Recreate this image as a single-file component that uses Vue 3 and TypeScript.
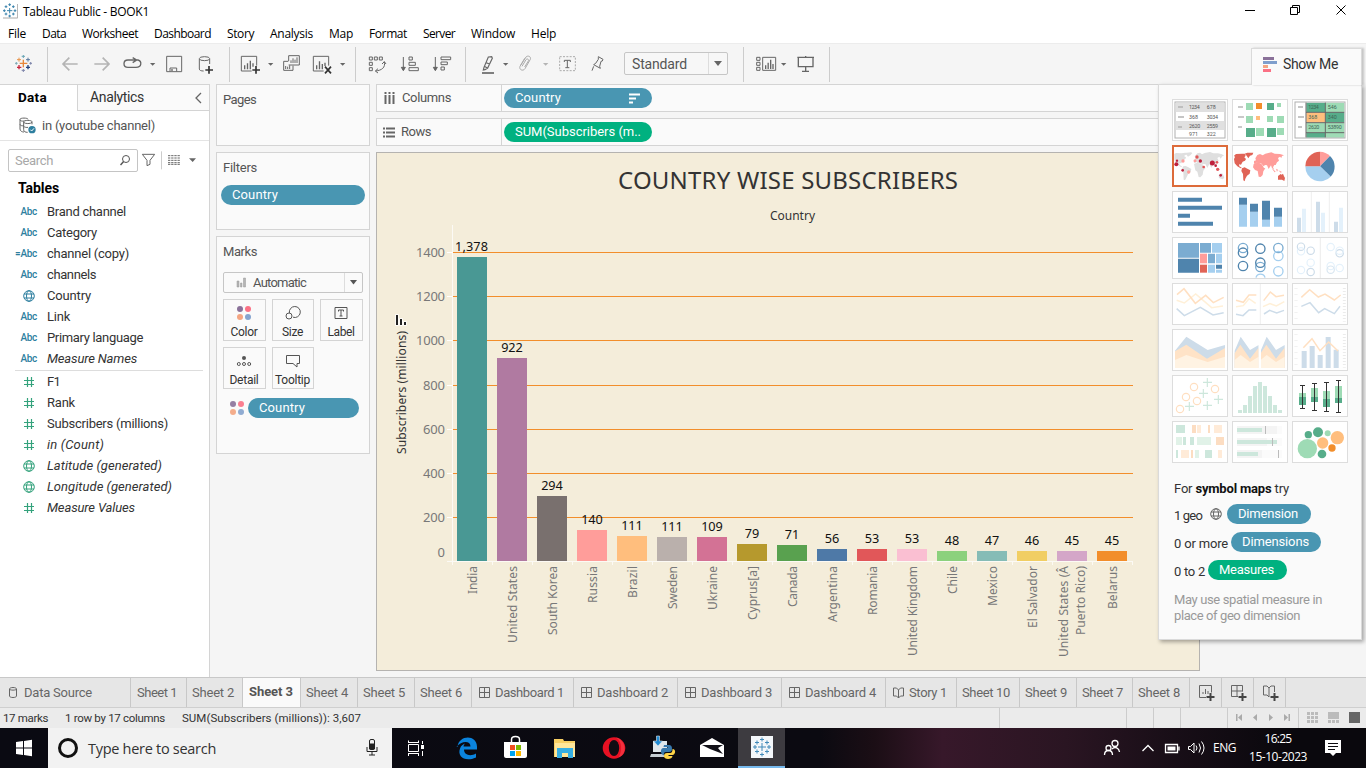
<script setup lang="ts">
interface Bar { name: string; value: string; top: number; color: string; len: number; second?: string }
interface Field { kind: 'abc' | 'calc' | 'geo' | 'num'; name: string; w: number; italic?: boolean }

// Adjusts tracking so that a label takes exactly the given width.
const vFit = {
  mounted(el: HTMLElement, binding: { value: number }) {
    const text = el.textContent ?? ''
    const width = el.getBoundingClientRect().width
    if (text.length) el.style.letterSpacing = `${(binding.value - width) / text.length}px`
  },
}

const menu: [string, number][] = [
  ['File', 18], ['Data', 24], ['Worksheet', 56], ['Dashboard', 57], ['Story', 27], ['Analysis', 43],
  ['Map', 24], ['Format', 38], ['Server', 32], ['Window', 44], ['Help', 25],
]

const dims: Field[] = [
  { kind: 'abc', name: 'Brand channel', w: 79 },
  { kind: 'abc', name: 'Category', w: 50 },
  { kind: 'calc', name: 'channel (copy)', w: 82 },
  { kind: 'abc', name: 'channels', w: 49 },
  { kind: 'geo', name: 'Country', w: 44 },
  { kind: 'abc', name: 'Link', w: 23 },
  { kind: 'abc', name: 'Primary language', w: 96 },
  { kind: 'abc', name: 'Measure Names', w: 90, italic: true },
]
const measures: Field[] = [
  { kind: 'num', name: 'F1', w: 13 },
  { kind: 'num', name: 'Rank', w: 28 },
  { kind: 'num', name: 'Subscribers (millions)', w: 121 },
  { kind: 'num', name: 'in (Count)', w: 57, italic: true },
  { kind: 'geo', name: 'Latitude (generated)', w: 115, italic: true },
  { kind: 'geo', name: 'Longitude (generated)', w: 125, italic: true },
  { kind: 'num', name: 'Measure Values', w: 88, italic: true },
]

const bars: Bar[] = [
  { name: 'India', value: '1,378', top: 257, color: '#499894', len: 28 },
  { name: 'United States', value: '922', top: 358, color: '#b07aa1', len: 77 },
  { name: 'South Korea', value: '294', top: 496, color: '#79706e', len: 69 },
  { name: 'Russia', value: '140', top: 530, color: '#ff9d9a', len: 37 },
  { name: 'Brazil', value: '111', top: 536, color: '#ffbe7d', len: 32 },
  { name: 'Sweden', value: '111', top: 537, color: '#bab0ac', len: 43 },
  { name: 'Ukraine', value: '109', top: 537, color: '#d37295', len: 44 },
  { name: 'Cyprus[a]', value: '79', top: 544, color: '#b6992d', len: 54 },
  { name: 'Canada', value: '71', top: 545, color: '#59a14f', len: 41 },
  { name: 'Argentina', value: '56', top: 549, color: '#4e79a7', len: 56 },
  { name: 'Romania', value: '53', top: 549, color: '#e15759', len: 49 },
  { name: 'United Kingdom', value: '53', top: 549, color: '#fabfd2', len: 90 },
  { name: 'Chile', value: '48', top: 551, color: '#8cd17d', len: 28 },
  { name: 'Mexico', value: '47', top: 551, color: '#86bcb6', len: 40 },
  { name: 'El Salvador', value: '46', top: 551, color: '#f1ce63', len: 62 },
  { name: 'United States (Â', value: '45', top: 551, color: '#d4a6c8', len: 91, second: 'Puerto Rico)' },
  { name: 'Belarus', value: '45', top: 551, color: '#f28e2b', len: 43 },
]
const ticks: [number, number][] = [
  [1400, 252], [1200, 296], [1000, 340], [800, 385], [600, 429], [400, 473], [200, 517],
]

const tabs: { name: string; icon?: string; w: number; tw: number }[] = [
  { name: 'Data Source', icon: 'db', w: 131, tw: 68 },
  { name: 'Sheet 1', w: 56, tw: 40 },
  { name: 'Sheet 2', w: 56, tw: 42 },
  { name: 'Sheet 3', w: 58, tw: 44 },
  { name: 'Sheet 4', w: 57, tw: 42 },
  { name: 'Sheet 5', w: 57, tw: 42 },
  { name: 'Sheet 6', w: 57, tw: 42 },
  { name: 'Dashboard 1', icon: 'dash', w: 102, tw: 69 },
  { name: 'Dashboard 2', icon: 'dash', w: 104, tw: 71 },
  { name: 'Dashboard 3', icon: 'dash', w: 104, tw: 71 },
  { name: 'Dashboard 4', icon: 'dash', w: 104, tw: 71 },
  { name: 'Story 1', icon: 'story', w: 71, tw: 38 },
  { name: 'Sheet 10', w: 63, tw: 48 },
  { name: 'Sheet 9', w: 57, tw: 42 },
  { name: 'Sheet 7', w: 56, tw: 41 },
  { name: 'Sheet 8', w: 57, tw: 42 },
]
</script>

<template>
  <div class="app">
    <header class="titlebar">
      <svg class="logo" width="18" height="22" viewBox="0 0 54 66">
        <path d="M9 54h44V12" fill="none" stroke="#aaa" stroke-width="3" />
        <g stroke="#3c84ad" stroke-width="3">
          <path d="M21 32h16M29 24v16M25 14h8M29 10v8M25 48h8M29 44v8M9 32h8M13 28v8M41 32h8M45 28v8M14 20h8M18 16v8M36 20h8M40 16v8M14 42h8M18 38v8M36 42h8M40 38v8" fill="none" />
        </g>
      </svg>
      <span v-fit="126" class="t apptitle">Tableau Public - BOOK1</span>
      <svg class="winctl" width="126" height="22" viewBox="1240 0 126 22" fill="none" stroke="#000">
        <path d="M1245 10.5h10M1290.500 7.500h7v7h-7zM1292.500 7v-1.500h7v7h-1.500M1336.500 5.500l9 9M1345.500 5.500l-9 9" />
      </svg>
    </header>
    <nav class="menubar"><span v-for="m in menu" :key="m[0]" v-fit="m[1]" class="t">{{ m[0] }}</span></nav>

    <div class="toolbar">
      <svg width="229" height="41" viewBox="0 129 687 123" fill="none">
        <g stroke-width="3">
          <path stroke="#e8873a" d="M59 190h23M70 179v23" stroke-width="4" /><path stroke="#6aa5b5" d="M65 169h10M70 165v9" />
          <path stroke="#e7934a" d="M51 179h12M57 173v12" /><path stroke="#59799e" d="M78 179h12M84 173v12" />
          <path stroke="#7caab5" d="M45 190h8M49 186v8" /><path stroke="#7d85aa" d="M88 190h8M92 186v8" />
          <path stroke="#c7263e" d="M51 202h13M57 195v13" stroke-width="4" /><path stroke="#26427d" d="M78 202h12M84 195v13" stroke-width="4" />
          <path stroke="#7d85aa" d="M65 211h10M70 207v9" />
        </g>
        <path d="M142.500 141v105" stroke="#ccc" stroke-width="3" />
        <path d="M233 192h-43M208 173l-19 19l19 19M283 192h43M308 173l19 19l-19 19" stroke="#b4b4b4" stroke-width="5" />
        <g stroke="#666" stroke-width="4">
          <path d="M398 180h-14c-16 0-16 22 0 22h24c18 0 18-18 6-22h-16M398 173l12 7l-12 8" />
          <path d="M500 169h45v46h-45zM510 214v-10h20v10" stroke-width="3" /><path d="M516 207v6" />
          <path d="M598 177v30c0 4 5 6 13 6M629 177v15" stroke-width="3" /><ellipse cx="613.500" cy="176" rx="15.500" ry="6" stroke-width="3" />
        </g>
        <path d="M627 198v23M616 210h23" stroke="#333" stroke-width="5" />
        <path d="M450 189h16l-8 8z" fill="#666" />
      </svg>
      <svg width="126" height="41" viewBox="687 129 378 123" fill="none">
        <path d="M688.500 141v105" stroke="#ccc" stroke-width="3" />
        <g stroke="#666" stroke-width="3">
          <path d="M755 213h-31v-44h46v28" /><path d="M734 196v12M742.500 190v18M751 182v26M759 190v10" stroke-width="4" />
          <path d="M866 183v-16h32v28h-32M865 184h-14v27h28v-14" /><path d="M873 181v8M879 175v14M885 179v10M891 172v17M857 198v9M863 200v7M869 196v11" />
          <path d="M971 213h-31v-44h46v28" /><path d="M950 196v12M958.500 184v24M967 192v16M975 188v10" stroke-width="4" />
        </g>
        <path d="M768 198v23M757 210h23" stroke="#333" stroke-width="5" />
        <path d="M975 200l18 20M993 200l-18 20" stroke="#333" stroke-width="5" />
        <path d="M804 189h16l-8 8zM1020 189h16l-8 8z" fill="#666" />
      </svg>
      <svg width="110" height="41" viewBox="1065 129 330 123" fill="none" stroke="#666" stroke-width="3">
        <path d="M1066.500 141v105" stroke="#ccc" />
        <path d="M1108 171h9v9h-9zM1123 171h9v9h-9zM1138 171h9v9h-9zM1108 187h9v9h-9zM1108 203h9v9h-9zM1153 185c4 18-8 26-26 28M1146 192l7-7l5 7M1134 206l-8 7l8 6" />
        <path d="M1210 171v39M1204 202l6 10l6-10z" fill="#666" />
        <path d="M1227 171h10v9h-10zM1227 187h19v9h-19zM1227 203h28v9h-28z" />
        <path d="M1306 171v39M1300 202l6 10l6-10z" fill="#666" />
        <path d="M1323 171h29v8h-29zM1323 186h19v8h-19zM1323 201h10v9h-10z" />
      </svg>
      <svg width="159" height="41" viewBox="135 129 477 123" fill="none" stroke="#666" stroke-width="3">
        <path d="M136.500 141v105" stroke="#ccc" />
        <path d="M186 219h36" stroke-width="5" />
        <path d="M205 171l10-1 2 5-14 29-8 5-5 1 2-8zM199 188l11 5M193 199l9 5" stroke-width="3.500" />
        <path d="M302 196l16-25c6-6 16-1 13 7l-16 28c-6 9-19 3-15-7l14-24M306 199l12-20c5-5 9 0 7 4l-11 18" stroke="#aaa" />
        <path d="M249 189h16l-8 8z" fill="#666" stroke="none" /><path d="M369 189h16l-8 8z" fill="#b4b4b4" stroke="none" />
        <path d="M419 170h47v42h-47z" stroke="#aaa" stroke-dasharray="6 4" />
        <path d="M433 186v-5h18v5M442 181v22M436 203h12" />
        <path d="M535 170l14 8-2 5-4 1-4 15 2 6-20-11 6-4 8-12 0-6zM521 199l-5 13" />
      </svg>
      <div class="select standard"><span v-fit="55" class="t">Standard</span><i><svg width="8" height="5"><path d="M0 0h8L4 5z" fill="#666" /></svg></i></div>
      <svg class="tail" width="102" height="41" viewBox="954 129 306 123" fill="none" stroke="#666" stroke-width="3">
        <path d="M970.500 141v105M1228.500 141v105" stroke="#ccc" />
        <path d="M1010 172h10v9h-10zM1010 187h10v9h-10zM1010 202h10v9h-10zM1028 172h39v39h-39z" />
        <path d="M1037 196v11M1044.500 188v19M1052 179v28M1059 192v15" stroke-width="4" /><path d="M1083 189h16l-8 8z" fill="#666" stroke="none" />
        <path d="M1132 172h50M1135 172v28h44v-28M1157 168v4M1157 200v13M1146 214h21" stroke-width="4" />
      </svg>
    </div>

    <main class="work">
      <aside class="side">
        <div class="sidetabs">
          <b class="on"><span v-fit="29" class="t">Data</span></b>
          <div class="off"><span v-fit="54" class="t">Analytics</span><svg width="8" height="12"><path d="M7 1L2 6l5 5" fill="none" stroke="#666" stroke-width="1.300" /></svg></div>
        </div>
        <div class="source">
          <svg width="18" height="18" viewBox="58 350 54 54" fill="none" stroke="#666" stroke-width="3">
            <path d="M61 357v29c0 6 6 9 12 9M61 357c0-5 24-5 24 0M61 358c0 4 7 5 12 4M61 372c0 4 7 5 12 4M72 364c0-5 25-5 25 0v8M72 364v24c0 6 5 8 12 8M72 366c3 5 22 5 25 0M72 378c3 3 9 4 13 3" />
            <circle cx="97" cy="388" r="11" fill="#2e7f9f" stroke="none" /><path d="M92 388l4 4 7-8" stroke="#fff" />
          </svg>
          <span v-fit="113" class="t">in (youtube channel)</span>
        </div>
        <div class="searchrow">
          <div class="search"><span v-fit="38" class="t">Search</span><svg width="10" height="11"><circle cx="6" cy="4" r="3.500" fill="none" stroke="#555" /><path d="M3.600 6.500L.5 10" stroke="#555" stroke-width="1.500" /></svg></div>
          <svg width="56" height="24" viewBox="420 447 168 72" fill="none" stroke="#666" stroke-width="3">
            <path d="M427 463h37l-14 18v12l-9 4v-16z" /><path d="M484.500 454v54" stroke="#ccc" />
            <path d="M504 467h36M504 474h36M504 481h36M504 488h36M504 493h36" stroke-dasharray="7 2.500" />
            <path d="M567 475h21l-10 11z" fill="#666" stroke="none" />
          </svg>
        </div>
        <h2><span v-fit="41" class="t">Tables</span></h2>
        <div v-for="(group, gi) in [dims, measures]" :key="gi" class="fields" :class="gi ? 'green' : 'blue'">
          <div v-for="f in group" :key="f.name" class="field">
            <span class="ficon">
              <svg v-if="f.kind === 'geo'" width="12" height="12" viewBox="0 0 12 12" fill="none" stroke="currentColor"><circle cx="6" cy="6" r="5.300" /><ellipse cx="6" cy="6" rx="2.500" ry="5.300" /><path d="M1 4h10M1 8h10" /></svg>
              <svg v-else-if="f.kind === 'num'" width="12" height="12" viewBox="0 0 12 12" fill="none" stroke="currentColor" stroke-width="1.200"><path d="M4.500 1v10M8.500 1v10M1 4.500h10M1 8.500h10" /></svg>
              <b v-else>{{ f.kind === 'calc' ? '=' : '' }}Abc</b>
            </span>
            <span v-fit="f.w" class="t" :class="{ it: f.italic }">{{ f.name }}</span>
          </div>
        </div>
      </aside>

      <section class="cards">
        <div class="card pages"><span v-fit="33" class="t">Pages</span></div>
        <div class="card filters"><span v-fit="34" class="t">Filters</span><div class="pill"><span v-fit="46" class="t">Country</span></div></div>
        <div class="card marks">
          <span v-fit="34" class="t">Marks</span>
          <div class="select auto">
            <svg width="10" height="11"><path d="M1 4h2v6H1zM4.500 6h1.500v4H4.500zM7.500 1h2v9h-2z" fill="#b5b5b5" stroke="#999" stroke-width=".5" /></svg>
            <span v-fit="53" class="t">Automatic</span><i><svg width="7" height="5"><path d="M0 0h7L3.500 4.500z" fill="#555" /></svg></i>
          </div>
          <div class="mbtns">
            <div><svg width="16" height="16"><circle cx="4" cy="4" r="3" fill="#8a7199" /><circle cx="12" cy="4" r="3" fill="#fb7185" /><circle cx="4" cy="12" r="3" fill="#f4a582" /><circle cx="12" cy="12" r="3" fill="#85a4cf" /></svg><span v-fit="27" class="t">Color</span></div>
            <div><svg width="16" height="16" fill="none" stroke="#555"><path d="M4.400 8A5.500 5.500 0 1 1 8 12.200" /><circle cx="4" cy="11" r="3" /></svg><span v-fit="21" class="t">Size</span></div>
            <div><svg width="16" height="16" fill="none" stroke="#555"><path d="M2 2.500h12v11H2zM5.500 6.500v-1.500h5v1.500M8 5v6M6.500 11h3" /></svg><span v-fit="27" class="t">Label</span></div>
            <div><svg width="16" height="16" fill="none" stroke="#555"><circle cx="8" cy="5" r="2" fill="#555" stroke="none" /><circle cx="2.800" cy="11" r="1.500" /><circle cx="8" cy="11" r="1.500" /><circle cx="13.200" cy="11" r="1.500" /></svg><span v-fit="29" class="t">Detail</span></div>
            <div><svg width="16" height="16" fill="none" stroke="#555"><path d="M1.500 2.500h13v8h-2.500v3.500l-4-3.500h-6.500z" /></svg><span v-fit="35" class="t">Tooltip</span></div>
          </div>
          <div class="encoding">
            <svg width="16" height="16"><circle cx="4" cy="4" r="3" fill="#957fa3" /><circle cx="12" cy="4" r="3" fill="#fb7f90" /><circle cx="4" cy="12" r="3" fill="#f4ad8c" /><circle cx="12" cy="12" r="3" fill="#90acd2" /></svg>
            <div class="pill"><span v-fit="46" class="t">Country</span></div>
          </div>
        </div>
      </section>

      <section class="stage">
        <div class="shelf">
          <label><svg width="11" height="13"><path d="M1.500 0v2M5.500 0v2M9.500 0v2M1.500 3v9M5.500 3v9M9.500 3v9" stroke="#666" stroke-width="2" /></svg><span v-fit="49" class="t">Columns</span></label>
          <div class="pill"><span v-fit="46" class="t">Country</span><svg width="11" height="11"><path d="M0 1.500h11M0 5.500h7M0 9.500h4" stroke="#fff" stroke-width="2" /></svg></div>
        </div>
        <div class="shelf">
          <label><svg width="12" height="11"><path d="M0 1.500h2M0 5.500h2M0 9.500h2M3 1.500h9M3 5.500h9M3 9.500h9" stroke="#666" stroke-width="1.800" /></svg><span v-fit="30" class="t">Rows</span></label>
          <div class="pill g"><span v-fit="126" class="t">SUM(Subscribers (m..</span></div>
        </div>
        <svg class="chart" width="824" height="519" viewBox="376 152 824 519">
          <rect x="376.500" y="152.500" width="823" height="518" fill="#f4edda" stroke="#b5b3b0" />
          <text x="618" y="189" font-size="24" fill="#333" textLength="340">COUNTRY WISE SUBSCRIBERS</text>
          <text x="770" y="220" font-size="12" fill="#333" textLength="45">Country</text>
          <text transform="translate(406 454) rotate(-90)" font-size="12" fill="#333" textLength="123">Subscribers (millions)</text>
          <path d="M396 315h2v10h-2zM400 319h2v6h-2zM404 322h2v3h-2z" fill="#222" stroke="#fff" stroke-width="1.500" paint-order="stroke" />
          <g v-for="t in ticks" :key="t[0]">
            <rect x="453" :y="t[1]" width="680" height="1" fill="#f28e2b" />
            <rect x="447" :y="t[1]" width="6" height="1" fill="#fff" />
            <text x="445" :y="t[1] + 5" font-size="13" fill="#787878" text-anchor="end" :textLength="t[0] > 999 ? 29 : 22">{{ t[0] }}</text>
          </g>
          <text x="445" y="557" font-size="13" fill="#787878" text-anchor="end">0</text>
          <path d="M452.500 225v340M447 561.500h686" stroke="#fcfaf5" />
          <g v-for="(b, i) in bars" :key="b.name">
            <rect :x="457 + i * 40" :y="b.top" width="30" :height="561 - b.top" :fill="b.color" />
            <rect :x="492 + i * 40" y="561" width="1" height="4" fill="#fcfaf5" />
            <text :x="(b.value.length === 5 ? 471.500 : 472) + i * 40" :y="b.top - 6" font-size="12.700" fill="#111" text-anchor="middle" :textLength="b.value.length === 5 ? 33 : b.value.length * 7.200">{{ b.value }}</text>
            <text :transform="`translate(${(b.second ? 468 : 477) + i * 40} ${566 + b.len}) rotate(-90)`" font-size="12" fill="#787878" :textLength="b.len">{{ b.name }}</text>
            <text v-if="b.second" :transform="`translate(${485 + i * 40} 635) rotate(-90)`" font-size="12" fill="#787878" textLength="69">{{ b.second }}</text>
          </g>
        </svg>
      </section>

      <aside class="showme">
        <div class="smtab">
          <svg width="15" height="16"><path d="M0 1h11v3H0z" fill="#8a7199" /><path d="M0 5h14v3H0z" fill="#7f9fcd" /><path d="M0 9h5v3H0z" fill="#f4a582" /><path d="M0 13h8v3H0z" fill="#fb7185" /></svg>
          <span v-fit="55" class="t">Show Me</span>
        </div>
        <div class="thumbs">
          <svg viewBox="0 0 168 126">
            <rect x="9" y="9" width="150" height="108" fill="#fff" stroke="#b0b0b0" stroke-width="3" />
            <path d="M11 11h146v28H11zM11 66h146v27H11z" fill="#e0e0e0" /><path d="M18 24h15M18 54h18M18 84h12" stroke="#b3b3b3" stroke-width="5" />
            <g font-size="16" fill="#555"><text x="51" y="30" textLength="32">1234</text><text x="104" y="30">678</text><text x="51" y="59">368</text><text x="104" y="59" textLength="34">3034</text><text x="51" y="86" textLength="34">2620</text><text x="104" y="86" textLength="34">2559</text><text x="51" y="110">971</text><text x="104" y="110">322</text></g>
          </svg>
          <svg viewBox="0 0 168 126">
            <path d="M18 24h15M18 54h18M18 84h12" stroke="#b8b8b8" stroke-width="5" />
            <path d="M42 12h21v21H42zM135 12h12v12h-12zM42 51h21v21H42zM105 51h18v18h-18zM135 51h21v21h-21zM72 87h24v24H72zM135 87h21v21h-21z" fill="#9edbb5" />
            <path d="M105 12h21v21h-21zM42 87h27v27H42zM105 87h27v27h-27z" fill="#57ad8a" /><path d="M72 12h18v18H72z" fill="#f28e2b" /><path d="M72 51h12v12H72z" fill="#ffbe7d" />
          </svg>
          <svg viewBox="0 0 168 126">
            <path d="M43 11h57v28H43zM100 40h57v30h-57zM43 101h57v15H43z" fill="#57ad8a" /><path d="M100 11h57v28h-57zM43 71h57v30H43zM100 71h57v45h-57z" fill="#9edbb5" /><path d="M43 40h57v30H43z" fill="#ffbe7d" />
            <path d="M42 10v106M100 10v106M42 40h115M42 71h115M42 101h115" stroke="#666" stroke-width="3" fill="none" />
            <rect x="9" y="9" width="150" height="108" fill="none" stroke="#b0b0b0" stroke-width="3" /><path d="M18 24h15M18 54h18M18 84h12" stroke="#b3b3b3" stroke-width="5" />
            <g font-size="16" fill="#3d6655"><text x="49" y="30" textLength="31">1234</text><text x="107" y="30">546</text><text x="49" y="61">368</text><text x="107" y="61">340</text><text x="49" y="91" textLength="33">2620</text><text x="107" y="91" textLength="42">53890</text></g>
          </svg>
          <svg viewBox="0 0 168 126" class="sel">
            <path d="M7 27l5-3 16 1 12-2 2 6-6 4 6 4-2 5-8 5-4 8-6-1 1 6 8 5-4 1-9-5-8-9-3-9zM37 24l20-2 4 2-5 6-8 5-4-5zM34 64l7-1 8 4 9 5-2 9-8 7-5 10-4 8-4-2-1-21-5-10zM68 47l2-8-2-5 8-9 8-2 6 5 8-4 16-3 10 4 14 0 12 3 6 4-5 2-5 7-4-6-6 4 4 8-7 4-4 10-5-4-6 12-6-12-6 12-6-12-8 0 2 4-8-8-8 2-4-4-8 4zM66 57l8-4 12 2 6 5 4 6 5 2-7 9-2 12-7 8-5-1-4-16-6-4zM140 91l6-6 6 1 3 7 2 6-6 4-10-4zM128 74l6 6M138 74l8 6" fill="#dfdfdf" />
            <g fill="#bf213c"><circle cx="13" cy="58" r="6" /><circle cx="15" cy="47" r="3.500" /><circle cx="85" cy="48" r="5" /><circle cx="121" cy="54" r="7.500" /><circle cx="131" cy="62" r="4" /><circle cx="32" cy="76" r="4" /><circle cx="146" cy="91" r="4" /></g>
            <g fill="#e15759"><circle cx="75" cy="36" r="5" /><circle cx="137" cy="73" r="5" /><circle cx="95" cy="66" r="4" /><circle cx="135" cy="52" r="4" /></g><g fill="#ff9d9a"><circle cx="33" cy="48" r="5" /><circle cx="69" cy="47" r="4.500" /><circle cx="50" cy="81" r="5" /></g>
          </svg>
          <svg viewBox="0 0 168 126">
            <path d="M6 32l6-5 18-1 8 0 3 6-4 5 5 5-3 5-7 3-5 9-6-1 1 6 8 5-4 1-10-6-8-9-2-13 3-6zM38 26l8-3 18 0-3 7-7 2-5 8-5-8zM30 70l8-3 8 4 9 5-2 10-8 6-5 9-2 8-4-3-1-19-5-9zM138 93l8-6 3 2 4-3 3 8 3 5-2 9-7-4-12 0z" fill="#e06356" />
            <path d="M66 53l0-5 6-2-2-6 6-10 8-3 8 4 8-5 18-4 10 4 16 1 12 4-6 2-2 6-4-4-6 4 3 8-6 5-4 8-4 0-4 7 3 6-6-3-3-9-7 11-5-11-6-1-4 4-8-9-8 2-4-4-8 3zM65 57l11-4 12 4 4 5 4 7 4 1-6 9-2 11-6 6-6-1-3-17-8-3-6-8zM123 72l8 8-3 2-7-9zM132 71l6 3-3 6zM139 76l10 4-2 4z" fill="#ff9d9a" />
          </svg>
          <svg viewBox="0 0 168 126"><path d="M84 64V20a44 44 0 0 1 30 13z" fill="#ff9d9a" /><path d="M84 64l30-31a44 44 0 0 1 2 62z" fill="#4f84ad" /><path d="M84 64l32 31A44 44 0 0 1 40 64z" fill="#a5cfef" /><path d="M84 64H40a44 44 0 0 1 44-44z" fill="#e06356" /></svg>

          <svg viewBox="0 0 168 126"><path d="M18 20h72v12H18zM18 44h132v12H18zM18 68h36v12H18zM18 92h105v12H18z" fill="#4f84ad" /></svg>
          <svg viewBox="0 0 168 126"><path d="M21 41h24v66H21zM54 62h24v45H54zM90 86h24v21H90zM126 77h24v30h-24z" fill="#a5cfef" /><path d="M21 20h24v21H21zM54 38h24v24H54zM90 29h24v57H90zM126 50h24v27h-24z" fill="#4f84ad" /></svg>
          <svg viewBox="0 0 168 126"><path d="M58 3v120M112 3v120" stroke="#eee" stroke-width="3" /><path d="M15 80h12v43H15zM72 32h12v91H72zM126 92h12v31h-12z" fill="#cddce9" /><path d="M30 53h12v70H30zM87 65h12v58H87zM141 50h12v73h-12z" fill="#e4f1fb" /></svg>

          <svg viewBox="0 0 168 126"><path d="M18 18h63v44H18zM84 18h33v29H84zM108 50h21v29h-21z" fill="#7bacd1" /><path d="M18 65h63v42H18zM132 83h18v12h-18z" fill="#4f84ad" /><path d="M120 18h30v29h-30zM132 50h18v29h-18zM108 83h21v24h-21zM132 98h18v9h-18z" fill="#a5cfef" /><path d="M84 50h21v29H84z" fill="#ff9d9a" /><path d="M84 83h21v24H84z" fill="#e06356" /></svg>
          <svg viewBox="0 0 168 126" fill="none" stroke-width="4"><g stroke="#7bacd1"><circle cx="33" cy="33" r="14" /><circle cx="85" cy="90" r="14" /><circle cx="139" cy="33" r="14" /></g><g stroke="#4f84ad"><circle cx="33" cy="47" r="14" /><circle cx="33" cy="87" r="14" /><circle cx="85" cy="35" r="14" /><circle cx="85" cy="77" r="14" /></g><g stroke="#a5cfef"><circle cx="139" cy="57" r="14" /><circle cx="139" cy="103" r="14" /><path d="M72 122c3-14 24-14 27 0" /></g></svg>
          <svg viewBox="0 0 168 126" fill="none" stroke-width="3.500"><path d="M85 3v120" stroke="#eee" /><g stroke="#cddce9"><circle cx="27" cy="29" r="11" /><circle cx="56" cy="41" r="11" /><circle cx="56" cy="105" r="11" /><circle cx="143" cy="49" r="11" /></g><g stroke="#e4f1fb"><circle cx="27" cy="43" r="11" /><circle cx="56" cy="77" r="11" /><circle cx="27" cy="99" r="11" /><circle cx="116" cy="30" r="11" /><circle cx="143" cy="41" r="11" /><circle cx="143" cy="93" r="11" /><circle cx="116" cy="87" r="11" /></g><circle cx="116" cy="98" r="11" stroke="#d9e6f0" /></svg>

          <svg viewBox="0 0 168 126" fill="none" stroke-width="4.500"><path d="M14 52l23 8 34-27 48 41 34-5" stroke="#fff0d8" /><path d="M15 35l21-18 34 44 31-24 23 22 31-16" stroke="#ffe0c2" /><path d="M14 77l23 21 48-25 38 23 32-7" stroke="#cddce9" /></svg>
          <svg viewBox="0 0 168 126" fill="none" stroke-width="4.500"><path d="M85 3v120" stroke="#eee" stroke-width="3" /><path d="M12 71l22-3 17-21 20 14M93 71l21-9 19 7 24-13" stroke="#fff0d8" /><path d="M12 52l22 6 17-22h22M95 53l20-26 17 14 24-4" stroke="#ffe0c2" /><path d="M12 94l21 4 18-17h22M96 93l17-11 21 8 22-8" stroke="#cddce9" /></svg>
          <svg viewBox="0 0 168 126" fill="none" stroke-width="4.500"><path d="M12 16v100" stroke="#eee" stroke-width="10" stroke-dasharray="2 16" /><path d="M157 16v100" stroke="#e5e5e5" stroke-width="9" stroke-dasharray="2 7" /><path d="M28 43l25-23 26 22 20-9 28 18 19-15" stroke="#ffe0c2" /><path d="M28 70l26-11 26 30 18-12 29 15 17-22" stroke="#cddce9" /></svg>

          <svg viewBox="0 0 168 126"><path d="M9 65l34-42 64 40 52-15v69H9z" fill="#cddce9" /><path d="M9 67l34-20 62 42 54-32v60H9z" fill="#ffe3c7" /><path d="M9 93l34-15 64 21 52-16v34H9z" fill="#fff3e3" /></svg>
          <svg viewBox="0 0 168 126"><g v-for="x in [0, 78]" :key="x" :transform="`translate(${x} 0)`"><path d="M8 65l18-42 28 40 26-15v69H8z" fill="#cddce9" /><path d="M8 73l17-26 29 42 26-33v61H8z" fill="#ffe3c7" /><path d="M8 93l18-15 28 21 26-16v34H8z" fill="#fff3e3" /></g><path d="M83.500 10v108" stroke="#fff" stroke-width="7" /></svg>
          <svg viewBox="0 0 168 126" fill="none"><path d="M12 16v100" stroke="#eee" stroke-width="10" stroke-dasharray="2 16" /><path d="M157 16v100" stroke="#e5e5e5" stroke-width="9" stroke-dasharray="2 7" /><path d="M29 66h15v51H29zM53 51h15v66H53zM77 78h15v39H77zM101 24h15v93h-15zM125 62h15v55h-15z" fill="#cddce9" /><path d="M34 56l26-27 24 36 26-26 28 27" stroke="#ffe0c2" stroke-width="4.500" /></svg>

          <svg viewBox="0 0 168 126" fill="none" stroke-width="3.500"><g stroke="#ffdfc0"><circle cx="66" cy="36" r="11" /><circle cx="129" cy="42" r="11" /><circle cx="42" cy="66" r="11" /><circle cx="75" cy="78" r="11" /><circle cx="24" cy="102" r="11" /></g><path d="M93 22h27M106 9v27M81 55h27M94 42v27M126 73h27M139 60v27M39 94h27M52 81v27M93 91h27M106 78v27" stroke="#cde7dc" /></svg>
          <svg viewBox="0 0 168 126"><path d="M18 105h12v9H18zM33 90h12v24H33zM48 63h12v51H48zM63 33h12v81H63zM78 21h12v93H78zM93 33h12v81H93zM108 63h12v51h-12zM123 90h12v24h-12zM138 105h12v9h-12z" fill="#cde7dc" /></svg>
          <svg viewBox="0 0 168 126" fill="none"><path d="M21 54h21v12H21zM57 39h21v27H57zM93 48h21v24H93zM129 33h21v36h-21z" fill="#9edbb5" /><path d="M21 66h21v24H21zM57 66h21v15H57zM93 72h21v24H93zM129 69h21v15h-21z" fill="#57ad8a" /><path d="M31.500 32v68M24 31.500h15M24 100.500h15M67.500 25v81M60 25.500h15M60 106.500h15M103.500 22v87M96 22.500h15M96 109.500h15M139.500 16v96M132 16.500h15M132 112.500h15" stroke="#333" stroke-width="3" /></svg>

          <svg viewBox="0 0 168 126"><path d="M12 12h27v24H12zM33 48h9v24h-9zM54 48h12v24H54zM12 87h6v24h-6zM99 87h21v24H99z" fill="#cde7dc" /><path d="M12 48h18v24H12zM75 48h42v24H75zM69 87h12v24H69z" fill="#e1f2e8" /><path d="M60 12h12v24H60zM108 12h6v24h-6zM132 48h24v24h-24zM57 87h6v24h-6z" fill="#fcddc2" /><path d="M75 12h12v24H75zM126 12h24v24h-24zM27 87h24v24H27zM138 87h12v24h-12z" fill="#ffebd8" /></svg>
          <svg viewBox="0 0 168 126"><path d="M15 15h135v24H15zM15 51h135v24H15zM15 87h135v24H15z" fill="#fbfbfb" /><path d="M15 15h120v24H15zM15 51h90v24H15zM15 87h75v24H15z" fill="#f4f4f4" /><path d="M15 21h75v12H15zM15 57h120v12H15zM15 93h63v12H15z" fill="#cde7dc" /><path d="M100.500 15v24M121.500 51v24M139.500 87v24" stroke="#bbb" stroke-width="3" /></svg>
          <svg viewBox="0 0 168 126"><g fill="#9edbb5"><circle cx="46" cy="83" r="29" /><circle cx="107" cy="37" r="9" /></g><g fill="#57ad8a"><circle cx="49" cy="41" r="11" /><circle cx="78" cy="34" r="15" /><circle cx="90" cy="99" r="13" /></g><g fill="#ffbe7d"><circle cx="92" cy="66" r="17" /><circle cx="136" cy="50" r="20" /></g><circle cx="120" cy="81" r="11" fill="#f28e2b" /></svg>
        </div>
        <div class="hint">
          <p><span v-fit="115" class="t">For <b>symbol maps</b> try</span></p>
          <p><span v-fit="28" class="t">1 geo</span><svg class="geo" width="12" height="12" viewBox="0 0 12 12" fill="none" stroke="#666"><circle cx="6" cy="6" r="5.300" /><ellipse cx="6" cy="6" rx="2.500" ry="5.300" /><path d="M1 4h10M1 8h10" /></svg><em><span v-fit="60" class="t">Dimension</span></em></p>
          <p><span v-fit="54" class="t">0 or more</span><em class="near"><span v-fit="67" class="t">Dimensions</span></em></p>
          <p><span v-fit="31" class="t">0 to 2</span><em class="near green"><span v-fit="55" class="t">Measures</span></em></p>
          <small><span v-fit="148" class="t">May use spatial measure in</span><br><span v-fit="126" class="t">place of geo dimension</span></small>
        </div>
      </aside>
    </main>

    <div class="tabs">
      <div v-for="t in tabs" :key="t.name" class="tab" :class="{ on: t.name === 'Sheet 3', ic: t.icon, src: t.icon === 'db' }" :style="{ width: t.w + 'px' }">
        <svg v-if="t.icon" class="tic" width="11" height="12" fill="none" stroke="#666">
          <path v-if="t.icon === 'dash'" d="M.5.5h10v10H.5zM5.500.5v10M.5 5.500h10" />
          <path v-else-if="t.icon === 'story'" d="M.5 1h3l2 2 2-2h3v8h-3l-2 2-2-2h-3zM5.500 3v8" />
          <path v-else d="M1.500 2v7c0 2 7 2 7 0V2c0-2-7-2-7 0c0 1.500 7 1.500 7 0" />
        </svg>
        <span v-fit="t.tw" class="t">{{ t.name }}</span>
      </div>
      <div class="tab add"><svg width="16" height="16" fill="none" stroke="#666"><path d="M7 12.500H.5V.5h12v7M4 9V7M6.500 9V4M9 9V6" /><path d="M11.500 8v8M7.500 12h8" stroke="#444" stroke-width="2" /></svg></div>
      <div class="tab add"><svg width="16" height="16" fill="none" stroke="#666"><path d="M7 11.500H.5V.5h11v6M6 .5v11M.5 6h11" /><path d="M11.500 8v8M7.500 12h8" stroke="#444" stroke-width="2" /></svg></div>
      <div class="tab add"><svg width="16" height="16" fill="none" stroke="#666"><path d="M6 12l-2-2H.5V1H4l2 2 2-2h3.500v6M6 3v9" /><path d="M11.500 8v8M7.500 12h8" stroke="#444" stroke-width="2" /></svg></div>
    </div>

    <div class="status">
      <span v-fit="45" class="t">17 marks</span><span v-fit="100" class="t">1 row by 17 columns</span><span v-fit="179" class="t">SUM(Subscribers (millions)): 3,607</span>
      <svg width="367" height="20" viewBox="999 708 367 20">
        <path d="M999.500 708v20M1126.500 708v20M1153.500 708v20M1180.500 708v20M1227.500 708v20M1298.500 708v20" stroke="#ccc" />
        <path d="M1236 714h1.500v7h-1.500zM1242 714v7l-4-3.500zM1257 714v7l-4-3.500zM1269 714v7l4-3.500zM1284 714v7l4-3.500zM1288.500 714h1.500v7h-1.500z" fill="#aaa" />
        <path d="M1307 712h3v3h-3zM1311 712h3v3h-3zM1315 712h3v3h-3zM1307 716h3v3h-3zM1311 716h3v3h-3zM1315 716h3v3h-3zM1307 720h3v3h-3zM1311 720h3v3h-3zM1315 720h3v3h-3zM1328 712h11v7h-11zM1328 720h3v3h-3zM1332 720h3v3h-3zM1336 720h3v3h-3z" fill="#bbb" />
        <path d="M1349 712h11v11h-11z" fill="#666" />
      </svg>
    </div>

    <footer class="taskbar">
      <svg width="48" height="40" viewBox="0 728 48 40"><path d="M16 742l7-1v6.500h-7zM24 740.900l8-1.100v7.700h-8zM16 748.500h7v6.500l-7-1zM24 748.500h8v7.700l-8-1.100z" fill="#fff" /></svg>
      <div class="tsearch">
        <svg width="20" height="20"><circle cx="10" cy="10" r="8.500" fill="none" stroke="#111" stroke-width="3" /></svg>
        <span v-fit="128" class="t">Type here to search</span>
        <svg class="mic" width="12" height="18" fill="none" stroke="#222"><rect x="3.500" y=".5" width="5" height="10" rx="1.500" /><path d="M3.500 5h5v5h-5z" fill="#222" /><path d="M1 8v4.500h10V8M6 13v3M3 16h6" /></svg>
      </div>
      <svg width="346" height="40" viewBox="392 728 346 40" fill="none">
        <g stroke="#fff"><path d="M408.500 743v-2.500M418.500 743v-2.500M408 742.500h11M408.500 744.500h10v7h-10zM408 753.500h11M408.500 753v3M418.500 753v3M422.500 741v3M422.500 751v5" /><path d="M422.500 745v4" stroke-width="3" /></g>
        <path d="M457.500 747c1-12 19-13 19.500-.5v3h-13c0 6 7 7 12 4v4c-11 5-19-1-16-9 1-3 3-4 5-5-1 1-1.500 2-1.500 3h7c0-6-9-6-14 .5z" fill="#0b84de" />
        <path d="M511.500 743v-3.500c0-4 8-4 8 0v3.500" stroke="#fff" stroke-width="1.500" /><path d="M504 742h23v14c0 1-1 2-2 2h-19c-1 0-2-1-2-2z" fill="#fff" /><path d="M510 745h5v5h-5z" fill="#f25022" /><path d="M516 745h5v5h-5z" fill="#7fba00" /><path d="M510 751h5v5h-5z" fill="#00a4ef" /><path d="M516 751h5v5h-5z" fill="#ffb900" />
        <path d="M554 739h9l1 2h11v16h-21z" fill="#f7cf63" /><path d="M555 743h20v14h-20z" fill="#ffe699" /><path d="M557 748h16v10h-5v-5h-6v5h-5z" fill="#36aee2" />
        <ellipse cx="614" cy="748" rx="11.300" ry="10.700" fill="#e81123" /><ellipse cx="614" cy="748" rx="5.200" ry="8" fill="#100d13" /><path d="M615.500 737.500c10 1 13 17 3 20 3-4 5-16-3-20z" fill="#fb5058" opacity=".5" />
        <path d="M653 741h14v11h-14z" fill="#dfe6ea" /><path d="M651 754h12l2 3h-15z" fill="#c6ced3" /><path d="M656.500 736h3v5h3l-4.500 5-4.500-5h3z" fill="#1e89d2" stroke="#dfe6ea" stroke-width=".6" /><path d="M664 745h5c2 0 3 1 3 4 0 2-1 3-3 3h-3c-2 0-2 1-2 3-4 0-4-7-.5-7h4v-1h-4z" fill="#3878ab" /><path d="M672.500 749c4 0 3 6 0 6h-4v1h4c0 4-9 4-8.500 0 0-2 1-3 3-3h3c2 0 2.500-2 2.500-4z" fill="#ffd547" />
        <path d="M700 745l12-7 12 7v12h-24z" fill="#fff" /><path d="M702 745h21l-5 3 5 6-13-5z" fill="#111018" />
      </svg>
      <div class="active"><svg width="22" height="24" viewBox="0 0 22 24"><path d="M0 1h22v22H0z" fill="#f4f7fa" /><path d="M7 12h8M11 8v8M9 4.500h4M11 2.500v4M9 19.500h4M11 17.500v4M2 12h4M4 10v4M16 12h4M18 10v4M4 7.500h4M6 5.500v4M14 7.500h4M16 5.500v4M4 16.500h4M6 14.500v4M14 16.500h4M16 14.500v4" stroke="#4189b8" fill="none" /></svg></div>
      <div class="tray">
        <svg width="110" height="40" viewBox="1095 728 110 40" fill="none" stroke="#fff" stroke-width="1.300">
          <circle cx="1107.500" cy="748" r="2.500" /><path d="M1103.500 755c0-6 8-6 8 0" /><circle cx="1114" cy="743.500" r="3" /><path d="M1111 749c3-3 7-1 7.500 3" />
          <path d="M1141.500 751l5.500-5.500 5.500 5.500" /><path d="M1164.500 744.500h12v8h-12zM1178 746.500v4" /><path d="M1166.500 746.500h8v4h-8z" fill="#fff" stroke="none" />
          <path d="M1187.500 746.500h2l3.500-3.500v10l-3.500-3.500h-2zM1195 745.500q2 2.500 0 5M1198 743.500q3 4.500 0 9M1200.500 741.500q5 6.500 0 13" stroke-width="1" />
        </svg>
        <span v-fit="23" class="t eng">ENG</span>
        <div class="clock"><span v-fit="27" class="t">16:25</span><span v-fit="58" class="t">15-10-2023</span></div>
        <svg class="note" width="16" height="18"><path d="M0 1h16v13h-5l-3 3-3-3H0z" fill="#fff" /><path d="M3 4.500h10M3 7.500h10M3 10.500h7" stroke="#0c0b10" /></svg>
      </div>
    </footer>
  </div>
</template>

<style>
html, body { margin: 0; overflow: hidden; }
</style>

<style scoped>
* { box-sizing: border-box; }
svg { flex: none; display: block; }
.app { width: 1366px; height: 768px; display: flex; flex-direction: column; overflow: hidden; background: #f5f5f5; font: 13px/16px Roboto, "Liberation Sans", sans-serif; color: #333; }
.t { display: inline-block; white-space: pre; flex: none; }
.titlebar { height: 23px; display: flex; background: #fff; font: 12px/23px "Open Sans", "Noto Sans", sans-serif; color: #000; }
.apptitle { margin-left: 5px; }
.winctl { margin-left: auto; }
.menubar { height: 20px; display: flex; gap: 16px; padding-left: 8px; background: #fff; color: #000; font: 12px/21px "Open Sans", "Noto Sans", sans-serif; }
.toolbar { height: 41px; display: flex; border-top: 1px solid #ececec; background: #f5f5f5; }
.toolbar > svg { margin-top: -1px; }
.select { display: flex; align-items: center; border: 1px solid #c6c6c6; border-radius: 2px; background: #fafafa; color: #555; }
.select i { display: flex; align-items: center; justify-content: center; height: 100%; border-left: 1px solid #ddd; margin-left: auto; }
.standard { width: 104px; height: 23px; margin-top: 8px; padding-left: 7px; font-size: 14px; background: #f7f7f7; }
.standard i { width: 19px; }
.toolbar .tail { margin-left: 10px; }

.work { position: relative; height: 593px; display: flex; }
.side { width: 210px; background: #fff; border: 1px solid #d4d4d4; border-left: 0; border-bottom: 0; }
.sidetabs { display: flex; height: 26px; line-height: 25px; font-size: 14px; }
.sidetabs .on { width: 77px; padding-left: 18px; color: #000; font-size: 13.500px; }
.off { flex: 1; display: flex; align-items: center; justify-content: space-between; padding: 0 7px 0 12px; border: solid #d4d4d4; border-width: 0 0 1px 1px; background: #fafafa; }
.source { height: 30px; display: flex; align-items: center; gap: 5px; padding-left: 19px; border-bottom: 1px solid #e4e4e4; color: #555; }
.searchrow { display: flex; padding: 8px 0 0 8px; height: 37px; gap: 2px; }
.search { width: 130px; height: 23px; border: 1px solid #c4c4c4; border-radius: 2px; display: flex; align-items: center; justify-content: space-between; padding: 0 7px 0 6px; color: #a8a8a8; }
h2 { margin: 1px 0 4px 18px; font-size: 14px; line-height: 18px; color: #000; }
.fields.blue { height: 169px; color: #2e7f9f; }
.fields.green { margin: 0 6px 0 15px; padding-top: 0; border-top: 1px solid #ddd; color: #34a27c; }
.field { height: 21px; display: flex; align-items: center; }
.field .t { color: #333; }
.ficon { width: 23px; margin-left: 15px; margin-right: 9px; display: flex; justify-content: flex-end; padding-right: 1px; }
.ficon svg { margin-right: 2px; }
.ficon b { font-size: 10px; line-height: 12px; font-weight: 500; letter-spacing: -.3px; }
.green .ficon { margin-left: 0; }
.it { font-style: italic; }

.cards { width: 154px; margin-left: 6px; display: flex; flex-direction: column; gap: 6px; }
.card { border: 1px solid #d4d4d4; background: #fafafa; padding: 7px 0 0 6px; color: #555; }
.pages { height: 62px; }
.filters { height: 78px; }
.marks { height: 218px; }
.pill { height: 20px; border-radius: 10px; background: #4996b2; color: #fff; display: flex; align-items: center; justify-content: space-between; padding: 0 12px 0 11px; }
.pill.g { background: #00b180; }
.filters .pill { width: 144px; margin: 9px 0 0 -2px; }
.auto { width: 140px; height: 21px; margin-top: 12px; padding-left: 12px; gap: 7px; }
.auto i { width: 18px; }
.mbtns { display: grid; grid-template-columns: 43px 42px 43px; gap: 6px; margin-top: 6px; color: #333; }
.mbtns div { height: 42px; border: 1px solid #d4d4d4; display: flex; flex-direction: column; align-items: center; padding: 5px 1px 0 0; gap: 3px; font-size: 12px; }
.encoding { display: flex; gap: 3px; align-items: center; margin: 9px 0 0 6px; }
.encoding .pill { width: 111px; }

.stage { width: 824px; margin-left: 6px; display: flex; flex-direction: column; gap: 6px; }
.shelf { height: 28px; width: 864px; border: 1px solid #d4d4d4; background: #fafafa; display: flex; align-items: center; }
.shelf label { width: 125px; height: 100%; border-right: 1px solid #d4d4d4; display: flex; align-items: center; gap: 7px; padding-left: 7px; color: #555; }
.shelf:nth-child(2) label { gap: 6px; padding-left: 6px; }
.shelf .pill { width: 148px; margin-left: 2px; }
.chart text { font-family: "Noto Sans", "Open Sans", sans-serif; }

.showme { position: absolute; left: 1158px; top: 0; width: 204px; height: 556px; background: #fafafa; border: 1px solid #dadada; box-shadow: 2px 2px 4px #0005; padding: 14px 0 0 13px; }
.smtab { position: absolute; left: 92px; top: -37px; width: 111px; height: 37px; background: #fafafa; border: 1px solid #dadada; border-bottom: 0; display: flex; align-items: center; gap: 5px; padding: 0 0 6px 11px; font-size: 14px; color: #333; box-shadow: 2px 0 2px #0003; }
.thumbs { display: grid; grid-template-columns: 56px 56px 56px; gap: 4px; }
.thumbs svg { width: 56px; height: 42px; box-shadow: inset 0 0 0 1px #ddd; background: #fff; }
.thumbs svg.sel { box-shadow: inset 0 0 0 2px #dd6b3a; }
.thumbs text { font-family: Roboto, sans-serif; }
.hint { padding: 17px 0 0 2px; color: #333; }
.hint p { margin: 0; height: 28px; display: flex; line-height: 18px; }
.hint p:first-child { height: 24px; }
.hint p:not(:first-child) > .t { margin-top: 3px; }
.hint b { color: #111; }
.hint em { font-style: normal; background: #4996b2; color: #fff; border-radius: 10px; height: 20px; line-height: 20px; padding: 0 13px 0 11px; margin-left: 5px; }
.hint em.near { margin-left: 3px; padding-right: 12px; }
.hint em.green { background: #00b180; padding-right: 13px; }
.geo { margin: 4px 0 0 8px; }
.hint small { display: block; font-size: 13px; line-height: 16px; color: #999; margin-top: 4px; }

.tabs { height: 31px; display: flex; border-top: 1px solid #c8c8c8; border-bottom: 1px solid #cfcfcf; background: #e6e6e6; color: #666; }
.tab { height: 29px; display: flex; align-items: center; border-right: 1px solid #c8c8c8; padding-left: 5px; }
.tab:nth-child(2) { padding-left: 6px; }
.tab.ic { padding-left: 7px; gap: 5px; }
.tab.src { padding-left: 8px; }
.tab.on { background: #fafafa; font-weight: 700; color: #555; padding-bottom: 2px; padding-left: 6px; }
.tab.add { width: 32px; padding-left: 9px; }
.status { height: 20px; display: flex; background: #ebebeb; font-size: 11.500px; line-height: 20px; padding-left: 3px; gap: 17px; }
.status svg { margin-left: auto; }
.taskbar { height: 40px; display: flex; background: linear-gradient(90deg, #0a0a12 0, #0b0a11 60%, #1b0e15 64%, #37182a 69%, #2a1522 78%, #180e17 86%, #0a080d 94%); color: #fff; font-family: "Open Sans", "Noto Sans", sans-serif; }
.tsearch { width: 344px; background: #f2f2f2; display: flex; align-items: center; color: #333; font-size: 14.500px; padding-left: 10px; gap: 10px; }
.tsearch .t { padding-top: 1px; }
.mic { margin-left: auto; margin-right: 14px; }
.active { width: 47px; background: #3d3b40; border-bottom: 2px solid #76b9ed; display: flex; align-items: center; justify-content: center; }
.tray { margin-left: auto; width: 270px; display: flex; align-items: center; font-size: 12px; }
.eng { margin-left: 7px; }
.clock { margin-left: 13px; display: flex; flex-direction: column; align-items: center; line-height: 18px; }
.note { margin-left: 18px; }
</style>
